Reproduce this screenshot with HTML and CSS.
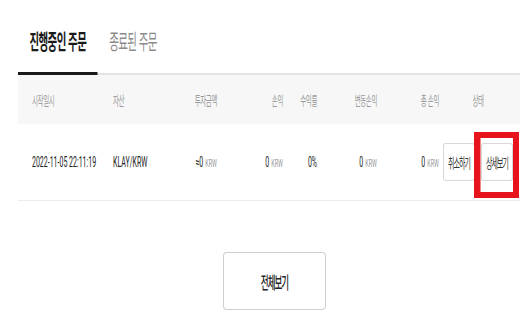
FILE: index.html
```html
<!DOCTYPE html>
<html lang="ko">
<head>
<meta charset="utf-8">
<link rel="stylesheet" href="styles.css">
</head>
<body>
<div class="frame">
  <div class="page">
    <div class="content">
      <div class="tabs">
        <div class="tab active">진행중인 주문</div>
        <div class="tab">종료된 주문</div>
      </div>
      <div class="table">
        <div class="grid thead">
          <div class="c1">시작일시</div>
          <div>자산</div>
          <div class="r">투자금액</div>
          <div class="r">손익</div>
          <div class="r">수익률</div>
          <div class="r">변동손익</div>
          <div class="r">총 손익</div>
          <div class="c8">상태</div>
          <div></div>
        </div>
        <div class="grid trow">
          <div class="c1">2022-11-05 22:11:19</div>
          <div>KLAY/KRW</div>
          <div class="r">≈0<span class="unit">KRW</span></div>
          <div class="r">0<span class="unit">KRW</span></div>
          <div class="r">0%</div>
          <div class="r">0<span class="unit">KRW</span></div>
          <div class="r">0<span class="unit">KRW</span></div>
          <div class="c8 actions">
            <button class="btn">취소하기</button>
            <button class="btn">상세보기</button>
          </div>
          <div></div>
        </div>
      </div>
      <div class="more">
        <button class="btn-more">전체보기</button>
      </div>
    </div>
    <div class="highlight"></div>
  </div>
</div>
</body>
</html>
```

FILE: styles.css
```css
html, body {
  margin: 0;
  padding: 0;
  background: #fff;
  overflow: hidden;
}

.frame {
  width: 520px;
  height: 334px;
  overflow: hidden;
}

.page {
  position: relative;
  width: 1040px;
  height: 334px;
  overflow: hidden;
  transform: scaleX(0.5);
  transform-origin: 0 0;
  font-family: Roboto, "Noto Sans CJK KR", sans-serif;
  color: #222;
}

.content {
  margin-left: 36px;
  width: 1004px;
}

.tabs {
  display: flex;
  height: 75px;
  box-shadow: inset 0 -2px 0 #e3e3e3;
}

.tab {
  padding: 26px 23px 0;
  font-family: "Noto Sans CJK KR", sans-serif;
  font-size: 21px;
  line-height: 28px;
  letter-spacing: -1.2px;
  color: #8a8a8a;
}

.tab.active {
  color: #1a1a1a;
  font-weight: 700;
  box-shadow: inset 0 -3px 0 #1a1a1a;
}

.grid {
  display: grid;
  grid-template-columns: 190px 104px 104px 132px 68px 120px 124px 156px 1fr;
  align-items: center;
}

.thead {
  height: 49px;
  background: #f7f7f7;
  font-family: "Noto Sans CJK KR", sans-serif;
  font-size: 13px;
  letter-spacing: -0.8px;
  color: #9a9a9a;
}

.trow {
  height: 76px;
  border-bottom: 1px solid #ececec;
  font-size: 14px;
  color: #222;
}

.c1 {
  padding-left: 28px;
}

.r {
  text-align: right;
}

.c8 {
  display: flex;
  justify-content: center;
}

.actions {
  gap: 12px;
}

.unit {
  font-size: 11px;
  color: #9a9a9a;
  margin-left: 4px;
}

.btn {
  width: 64px;
  height: 38px;
  box-sizing: border-box;
  padding: 0;
  background: #fff;
  border: 1px solid #d8d8d8;
  border-left-width: 2px;
  border-right-width: 2px;
  border-radius: 6px / 3px;
  font-family: "Noto Sans CJK KR", sans-serif;
  font-size: 14px;
  letter-spacing: -2px;
  color: #333;
}

.more {
  display: flex;
  justify-content: center;
  padding-top: 51px;
  padding-left: 22px;
}

.btn-more {
  width: 206px;
  height: 58px;
  box-sizing: border-box;
  padding: 0;
  background: #fff;
  border: 1px solid #cfcfcf;
  border-left-width: 2px;
  border-right-width: 2px;
  border-radius: 8px / 4px;
  font-family: "Noto Sans CJK KR", sans-serif;
  font-size: 17px;
  font-weight: 500;
  letter-spacing: -2px;
  color: #222;
}

.highlight {
  position: absolute;
  left: 948px;
  top: 132px;
  width: 90px;
  height: 66px;
  box-sizing: border-box;
  border: 6px solid #e8141c;
  border-left-width: 13px;
  border-right-width: 12px;
}
```
